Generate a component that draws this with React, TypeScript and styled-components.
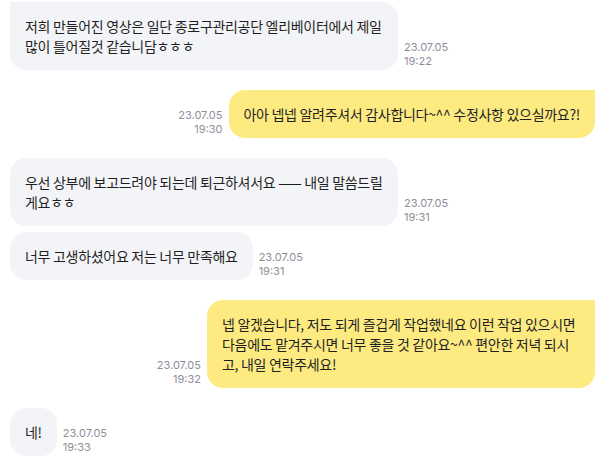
import React from "react";
import styled, { createGlobalStyle, css } from "styled-components";

const Global = createGlobalStyle`
  html, body { margin: 0; padding: 0; background: #ffffff; }
  body { font-family: "Noto Sans CJK KR", "Noto Sans", sans-serif; }
`;

const Chat = styled.div`
  display: flex;
  flex-direction: column;
  padding: 2px 17px 0 10px;
  width: 612px;
  box-sizing: border-box;
`;

const Row = styled.div<{ $mine?: boolean; $cont?: boolean }>`
  display: flex;
  align-items: flex-end;
  gap: 6px;
  justify-content: ${(p) => (p.$mine ? "flex-end" : "flex-start")};
  margin-top: ${(p) => (p.$cont ? "6px" : "20px")};
  &:first-child { margin-top: 0; }
`;

const Bubble = styled.div<{ $mine?: boolean; $wide?: boolean; $tail?: boolean }>`
  box-sizing: border-box;
  padding: 14px 15px;
  border-radius: 16px;
  background: ${(p) => (p.$mine ? "#fdeb82" : "#f3f4f7")};
  color: #1f1f23;
  font-family: "Noto Sans CJK KR", "Noto Sans", sans-serif;
  font-size: 14px;
  line-height: 20px;
  letter-spacing: -0.3px;
  white-space: pre-line;
  ${(p) => p.$wide && css`width: 388px;`}
  ${(p) =>
    p.$tail &&
    (p.$mine
      ? css`border-top-right-radius: 0;`
      : css`border-top-left-radius: 0;`)}
`;

const Stamp = styled.div<{ $mine?: boolean }>`
  font-family: Inter, "Noto Sans", sans-serif;
  font-size: 11px;
  line-height: 14px;
  color: #8e8e99;
  text-align: ${(p) => (p.$mine ? "right" : "left")};
  padding-bottom: 2px;
  white-space: nowrap;
`;

type Msg = { mine?: boolean; cont?: boolean; tail?: boolean; wide?: boolean; text: string; date: string; time: string };

const messages: Msg[] = [
  { tail: true, wide: true, text: "저희 만들어진 영상은 일단 종로구관리공단 엘리베이터에서 제일\n많이 틀어질것 같습니담ㅎㅎㅎ", date: "23.07.05", time: "19:22" },
  { mine: true, tail: true, text: "아아 넵넵 알려주셔서 감사합니다~^^ 수정사항 있으실까요?!", date: "23.07.05", time: "19:30" },
  { wide: true, text: "우선 상부에 보고드려야 되는데 퇴근하셔서요 —— 내일 말씀드릴\n게요ㅎㅎ", date: "23.07.05", time: "19:31" },
  { cont: true, text: "너무 고생하셨어요 저는 너무 만족해요", date: "23.07.05", time: "19:31" },
  { mine: true, tail: true, wide: true, text: "넵 알겠습니다, 저도 되게 즐겁게 작업했네요 이런 작업 있으시면\n다음에도 맡겨주시면 너무 좋을 것 같아요~^^ 편안한 저녁 되시\n고, 내일 연락주세요!", date: "23.07.05", time: "19:32" },
  { text: "네!", date: "23.07.05", time: "19:33" },
];

export default function App() {
  return (
    <>
      <Global />
      <Chat>
        {messages.map((m, i) => {
          const stamp = (
            <Stamp $mine={m.mine}>
              {m.date}
              <br />
              {m.time}
            </Stamp>
          );
          const bubble = (
            <Bubble $mine={m.mine} $wide={m.wide} $tail={m.tail}>
              {m.text}
            </Bubble>
          );
          return (
            <Row key={i} $mine={m.mine} $cont={m.cont}>
              {m.mine ? (
                <>
                  {stamp}
                  {bubble}
                </>
              ) : (
                <>
                  {bubble}
                  {stamp}
                </>
              )}
            </Row>
          );
        })}
      </Chat>
    </>
  );
}
